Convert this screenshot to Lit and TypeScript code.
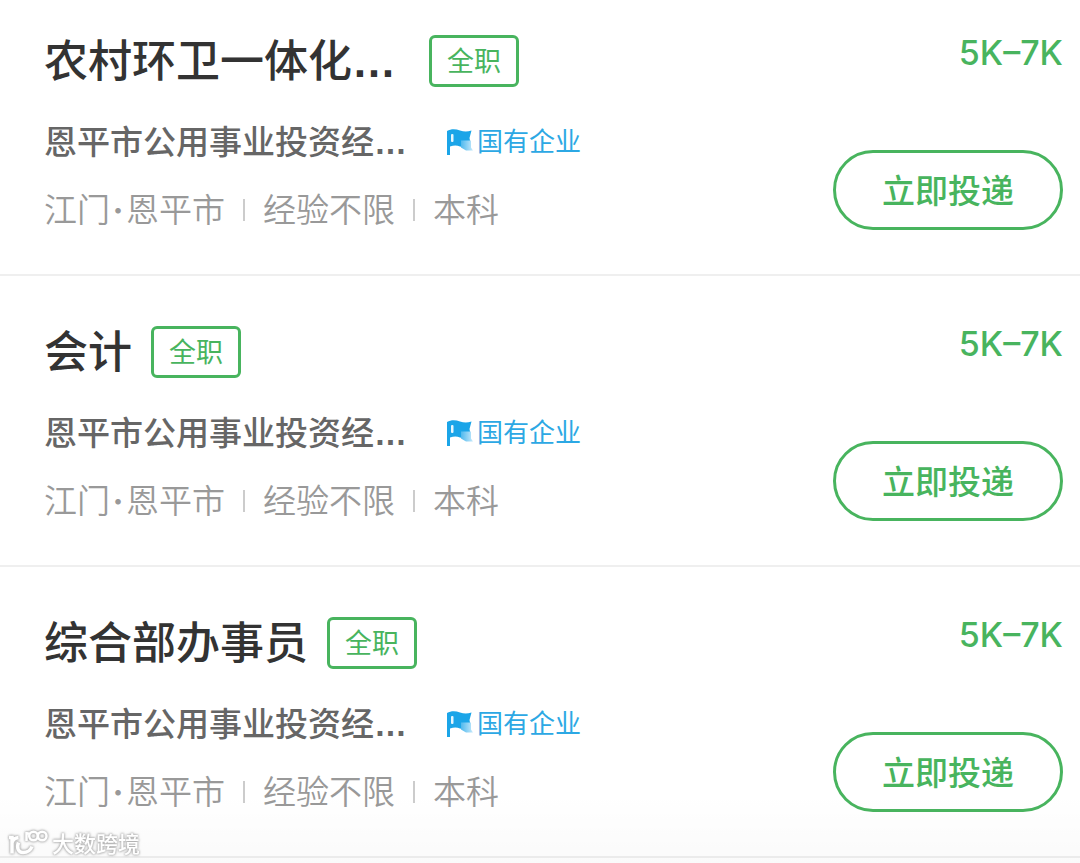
import { LitElement, html, css, svg } from "lit";
import { customElement, property } from "lit/decorators.js";

interface Job {
  title: string;
  clipped?: boolean;
  kind: string;
  company: string;
  nature: string;
  city: string;
  district: string;
  experience: string;
  degree: string;
  salary: string;
}

const base = {
  kind: "全职",
  company: "恩平市公用事业投资经",
  nature: "国有企业",
  city: "江门",
  district: "恩平市",
  experience: "经验不限",
  degree: "本科",
  salary: "5K–7K",
};

const jobs: Job[] = [
  { ...base, title: "农村环卫一体化", clipped: true },
  { ...base, title: "会计" },
  { ...base, title: "综合部办事员" },
];

const flag = svg`
  <defs>
    <linearGradient id="fade" x1="0" y1="0" x2="1" y2="0">
      <stop offset="0" stop-color="#4fb9ee" />
      <stop offset="1" stop-color="#c6e9fb" />
    </linearGradient>
  </defs>
  <path fill="#1ba5e8" d="M0 2C4-.4 8.500-.4 13 1.500c4 1.500 7.500 1.400 11.500.1L22.500 9 24 17c-4 1.300-7.500 1.600-11 .4-3.200-1.200-6.200-1.200-10 .1V26H0z" />
  <rect x="4" y="5" width="2.500" height="8" rx="1" fill="#e6f6fe" />
  <path fill="url(#fade)" d="M14 11.500h10v7l2 3h-7l-5-3z" />
`;

@customElement("job-card")
export class JobCard extends LitElement {
  @property({ attribute: false }) job!: Job;

  static styles = css`
    :host {
      display: flex;
      justify-content: space-between;
      gap: 24px;
      padding: 50px 17px 44px 44px;
      border-bottom: 2px solid #efefef;
    }
    :host(:first-child) {
      padding-top: 35px;
    }
    .info {
      display: flex;
      flex-direction: column;
      min-width: 0;
      white-space: nowrap;
    }
    .head {
      display: flex;
      align-items: center;
      gap: 19px;
      height: 52px;
    }
    .title {
      margin: 0;
      font-size: 44px;
      line-height: 52px;
      font-weight: 500;
      color: #333;
    }
    .clipped {
      width: 366px;
    }
    .more {
      font-family: "Liberation Sans", sans-serif;
      font-weight: 700;
      line-height: 1;
    }
    .tag {
      box-sizing: border-box;
      height: 52px;
      padding: 0 15px;
      border: 3px solid #48b45e;
      border-radius: 6px;
      font-size: 27px;
      line-height: 48px;
      color: #48b45e;
    }
    .firm {
      display: flex;
      align-items: center;
      gap: 40px;
      margin-top: 31px;
      font-size: 33px;
      line-height: 48px;
      font-weight: 500;
      color: #666;
    }
    .nature {
      display: flex;
      align-items: center;
      gap: 4px;
      font-size: 26px;
      font-weight: 400;
      color: #2ca8e4;
    }
    .flag {
      width: 26px;
      height: 26px;
    }
    .meta {
      display: flex;
      align-items: center;
      gap: 18px;
      margin-top: 24px;
      font-size: 33px;
      line-height: 40px;
      font-weight: 350;
      color: #999;
    }
    .place {
      display: flex;
    }
    .dot {
      width: 16px;
      text-align: center;
      font-weight: 700;
    }
    .bar {
      width: 2px;
      height: 22px;
      background: #ccc;
    }
    .side {
      display: flex;
      flex-direction: column;
      justify-content: space-between;
      align-items: flex-end;
      flex: none;
    }
    .salary {
      font-size: 34px;
      line-height: 36px;
      font-weight: 500;
      color: #48b45e;
    }
    .apply {
      box-sizing: border-box;
      height: 80px;
      padding: 2px 46px 0;
      border: 3px solid #48b45e;
      border-radius: 40px;
      background: #fff;
      font: inherit;
      font-size: 33px;
      line-height: 48px;
      font-weight: 500;
      color: #48b45e;
      cursor: pointer;
    }
  `;

  render() {
    const j = this.job;
    const more = html`<span class="more">…</span>`;
    return html`
      <div class="info">
        <div class="head">
          <h2 class="title ${j.clipped ? "clipped" : ""}">${j.title}${j.clipped ? more : ""}</h2>
          <span class="tag">${j.kind}</span>
        </div>
        <div class="firm">
          <span>${j.company}${more}</span>
          <span class="nature">
            <svg class="flag" viewBox="0 0 26 26" aria-hidden="true">${flag}</svg>
            <span>${j.nature}</span>
          </span>
        </div>
        <div class="meta">
          <span class="place"><span>${j.city}</span><span class="dot">·</span><span>${j.district}</span></span>
          <span class="bar"></span>
          <span>${j.experience}</span>
          <span class="bar"></span>
          <span>${j.degree}</span>
        </div>
      </div>
      <div class="side">
        <span class="salary">${j.salary}</span>
        <button class="apply" type="button">立即投递</button>
      </div>
    `;
  }
}

@customElement("app-root")
export class AppRoot extends LitElement {
  static styles = css`
    :host {
      display: block;
      position: relative;
      min-height: 100vh;
      background: #fff;
      font-family: Inter, "Noto Sans CJK SC", sans-serif;
    }
    .shade {
      position: absolute;
      inset: auto 0 0 0;
      height: 70px;
      background: linear-gradient(rgba(0, 0, 0, 0), rgba(0, 0, 0, 0.02));
      pointer-events: none;
    }
    .mark {
      position: absolute;
      left: 8px;
      bottom: 4px;
      display: flex;
      align-items: center;
      gap: 4px;
      font-size: 22px;
      line-height: 30px;
      font-weight: 500;
      color: #fff;
      filter: drop-shadow(0 0 1px #aaa) drop-shadow(0 0 1px #bbb);
    }
    .logo {
      width: 40px;
      height: 30px;
    }
  `;

  render() {
    return html`
      <main>${jobs.map((job) => html`<job-card .job=${job}></job-card>`)}</main>
      <div class="shade"></div>
      <div class="mark">
        <svg class="logo" viewBox="0 0 40 30" fill="none" stroke="#fff" stroke-width="3.500" aria-hidden="true">
          <path d="M1 8.500h3v16M4 14q1-5 6.500-5.500" />
          <path d="M10.500 13.500c-2 5-.5 10 4.500 10s7.500-2 9-6" />
          <path stroke-width="2.500" d="M18.500 3v9M18.500 4.500h2.500" />
          <circle cx="25.500" cy="7" r="4.300" stroke-width="2.500" />
          <circle cx="34.200" cy="7" r="4.300" stroke-width="2.500" />
        </svg>
        <span>大数跨境</span>
      </div>
    `;
  }
}
